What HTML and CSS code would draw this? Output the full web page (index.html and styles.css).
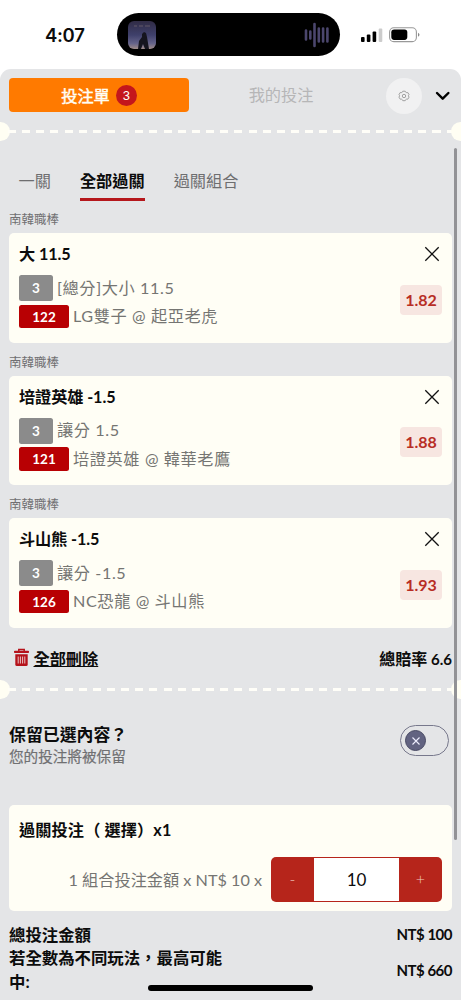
FILE: index.html
```html
<!DOCTYPE html>
<html lang="zh-Hant">
<head>
<meta charset="utf-8">
<meta name="viewport" content="width=device-width, initial-scale=1">
<title>投注單</title>
<link rel="stylesheet" href="styles.css">
</head>
<body>
<div class="screen">
  <div class="status">
    <div class="time">4:07</div>
    <div class="island">
      <svg class="art" width="28" height="28" viewBox="0 0 28 28">
        <defs><linearGradient id="sky" x1="0" y1="0" x2="0" y2="1"><stop offset="0" stop-color="#302b45"/><stop offset=".5" stop-color="#3f406b"/><stop offset=".8" stop-color="#65638a"/><stop offset="1" stop-color="#a08c88"/></linearGradient></defs>
        <rect width="28" height="28" rx="6" fill="url(#sky)"/>
        <path d="M6 5h3M11 5h4M17 5h5" stroke="#625869" stroke-width="1"/>
        <path d="M10 28l1-8 3-4 0-3 2-2 2 1 1 4 1 6 1 6h-4l-2-5-2 5z" fill="#15151f"/>
      </svg>
      <svg class="wave" width="26" height="26" viewBox="0 0 26 26" stroke="#4b466d" stroke-width="2.6" stroke-linecap="round"><path d="M2 8.500v9M6.300 9.500v7M10.500 2v22M14.800 6.500v13M19.100 6.500v13M23.400 6.500v13"/></svg>
    </div>
    <div class="signals">
      <svg width="22" height="15" viewBox="0 0 22 15"><rect x="0" y="9" width="3.600" height="5" rx="1"/><rect x="5.800" y="6.500" width="3.600" height="7.500" rx="1"/><rect x="11.600" y="3.500" width="3.600" height="10.500" rx="1"/><rect x="17.700" y="0.500" width="3.600" height="13.500" rx="1" fill="#ccc"/></svg>
      <svg width="32" height="16" viewBox="0 0 32 16"><rect x=".6" y=".8" width="26.800" height="13.800" rx="4.200" fill="none" stroke="#999" stroke-width="1.100"/><rect x="2.300" y="2.500" width="16" height="10.400" rx="2.800"/><path d="M29 5.700q3 2 0 4z" fill="#888"/></svg>
    </div>
  </div>

  <div class="slip">
    <header class="top">
      <div class="main-tab">投注單<span class="count">3</span></div>
      <div class="other-tab">我的投注</div>
      <div class="gear"><svg width="12" height="12" viewBox="0 0 12 12" fill="none" stroke="#999" stroke-width=".9"><path d="M4.800 1.200h2.400l.5 1 1.100.5 1.100-.1 1.100 2-.6 1.100.6 1.500-1.200 2-1.200-.1-.9.600-.5 1H4.800l-.5-1-.9-.6-1.200.1-1.200-2 .6-1.500L1 4.600l1.100-2 1.100.1 1.100-.5z"/><circle cx="6" cy="6" r="1.700"/></svg></div>
      <svg class="chev" width="16" height="10" viewBox="0 0 16 10" fill="none" stroke="#000" stroke-width="2.400" stroke-linecap="round" stroke-linejoin="round"><path d="M2 2l5.700 5.700L13.400 2"/></svg>
    </header>
    <div class="tear"><i class="hole"></i><i class="dashes"></i><i class="hole right"></i></div>

    <nav class="modes"><span>一關</span><span class="active">全部過關</span><span>過關組合</span></nav>

    <section class="bet">
      <div class="league">南韓職棒</div>
      <div class="card">
        <div class="pick">大 11.5</div>
        <div class="line market"><b class="tag">3</b><span>[總分]大小 11.5</span></div>
        <div class="line"><b class="tag red">122</b><span>LG雙子 @ 起亞老虎</span></div>
        <svg class="close" width="16" height="16" viewBox="0 0 16 16"><path d="M1.300 1.300l13.400 13.400M14.700 1.300L1.300 14.700"/></svg>
        <div class="odds">1.82</div>
      </div>
    </section>
    <section class="bet">
      <div class="league">南韓職棒</div>
      <div class="card">
        <div class="pick">培證英雄 -1.5</div>
        <div class="line market"><b class="tag">3</b><span>讓分 1.5</span></div>
        <div class="line"><b class="tag red">121</b><span>培證英雄 @ 韓華老鷹</span></div>
        <svg class="close" width="16" height="16" viewBox="0 0 16 16"><path d="M1.300 1.300l13.400 13.400M14.700 1.300L1.300 14.700"/></svg>
        <div class="odds">1.88</div>
      </div>
    </section>
    <section class="bet">
      <div class="league">南韓職棒</div>
      <div class="card">
        <div class="pick">斗山熊 -1.5</div>
        <div class="line market"><b class="tag">3</b><span>讓分 -1.5</span></div>
        <div class="line"><b class="tag red">126</b><span>NC恐龍 @ 斗山熊</span></div>
        <svg class="close" width="16" height="16" viewBox="0 0 16 16"><path d="M1.300 1.300l13.400 13.400M14.700 1.300L1.300 14.700"/></svg>
        <div class="odds">1.93</div>
      </div>
    </section>

    <div class="totals">
      <svg width="15" height="19" viewBox="0 0 15 19"><path d="M4.800 3V1.500h5.400V3" fill="none" stroke="#b5121b" stroke-width="1.500"/><rect x="0" y="2.700" width="15" height="2.300" rx=".8" fill="#b5121b"/><path d="M1.300 6.300h12.400v10.200q0 1.500-1.500 1.500H2.800q-1.500 0-1.500-1.500z" fill="#b5121b"/><path d="M4.200 8.500v7M6.400 8.500v7M8.600 8.500v7M10.800 8.500v7" stroke="#eed8d8" stroke-width=".9"/></svg>
      <span class="clear">全部刪除</span>
      <span class="sum">總賠率 <em>6.6</em></span>
    </div>
    <div class="tear"><i class="hole"></i><i class="dashes"></i><i class="hole right"></i></div>

    <div class="keep">
      <div><div class="keep-title">保留已選內容？</div><div class="keep-note">您的投注將被保留</div></div>
      <div class="switch"><span class="knob"><svg width="10" height="10" viewBox="0 0 10 10"><path d="M1.500 1.500l7 7M8.500 1.500l-7 7" stroke="#eef" stroke-width="1.100"/></svg></span></div>
    </div>

    <div class="stake">
      <div class="stake-title">過關投注（ 選擇）x1</div>
      <div class="stake-row">
        <span class="formula">1 組合投注金額 x NT$ 10 x</span>
        <div class="stepper"><span class="step">-</span><span class="value">10</span><span class="step">+</span></div>
      </div>
    </div>

    <footer class="summary">
      <div class="sum-row"><span>總投注金額</span><span class="money">NT$ 100</span></div>
      <div class="sum-row"><span class="potential">若全數為不同玩法，最高可能中:</span><span class="money">NT$ 660</span></div>
    </footer>
    <div class="scrollbar"></div>
  </div>
  <div class="home"></div>
</div>
</body>
</html>
```
FILE: styles.css
```css
* { box-sizing: border-box; }
body { margin: 0; background: #fff; color: #0c0c0c; font-family: Lato, "Noto Sans CJK TC", sans-serif; font-size: 16.2px; }
svg { display: block; flex: none; }
.screen { position: relative; width: 461px; height: 1000px; overflow: hidden; }
.status { height: 69px; display: flex; align-items: flex-start; padding-top: 13px; }
.time { width: 117px; padding-left: 45px; font: 600 18.500px/44px Inter, sans-serif; letter-spacing: -0.3px; }
.island { width: 223px; height: 43px; border-radius: 22px; background: #000; display: flex; justify-content: space-between; align-items: center; padding: 0 10px 0 11px; }
.signals { display: flex; gap: 6px; align-items: center; padding: 14px 0 0 21px; }
.slip { position: relative; height: 931px; background: #e4e5e7; border-radius: 11px 11px 0 0; }
.top { height: 53px; padding: 9px 10px 0 9px; display: flex; align-items: flex-start; }
.main-tab { width: 180px; height: 34px; border-radius: 4px; background: #ff7a00; color: #fffef5; display: flex; align-items: center; justify-content: center; gap: 6px; -webkit-text-stroke: .45px; }
.count { width: 21px; height: 21px; border-radius: 50%; background: #c4161c; font: 13px/21px "Liberation Sans", sans-serif; text-align: center; -webkit-text-stroke: 0; }
.other-tab { width: 183px; padding-left: 1px; line-height: 34px; color: #b6b6b7; text-align: center; }
.gear { width: 36px; height: 36px; margin-left: 14px; border-radius: 50%; background: #f1f1f2; display: flex; align-items: center; justify-content: center; }
.chev { margin: 13px 0 0 13px; }
.tear { height: 19px; display: flex; align-items: center; justify-content: space-between; overflow: hidden; }
.hole { width: 19px; height: 19px; border-radius: 50%; background: #fffef3; margin-left: -9px; flex: none; }
.hole.right { margin: 0 -9px 0 0; }
.dashes { flex: 1; height: 3px; margin: 0 -2px 0 -2px; background: repeating-linear-gradient(90deg, #fffef8 0 8px, transparent 8px 14.150px); }
.modes { height: 69px; padding: 26px 0 0 18.500px; display: flex; align-items: flex-start; gap: 29px; color: #6e6e70; line-height: 27px; }
.modes span { height: 33.500px; }
.modes .active { color: #0c0c0c; font-weight: 700; border-bottom: 3.500px solid #b5171c; }
.bet { height: 142.500px; padding: 0 9px; }
.league { height: 23.300px; font-size: 12.500px; line-height: 20px; color: #707072; }
.card { position: relative; height: 109.500px; border-radius: 5px; background: #fffef5; padding: 8px 10px; }
.pick { height: 34px; line-height: 26px; font-weight: 700; letter-spacing: -.1px; }
.line { height: 23.500px; display: flex; align-items: center; gap: 4px; color: #757572; letter-spacing: .6px; line-height: 22px; white-space: nowrap; }
.line span { margin-top: -1px; }
.market { height: 26px; margin-bottom: 3.500px; }
.tag { width: 34px; height: 26px; border-radius: 2.500px; background: #8b8b8b; color: #fff; font-size: 13.500px; line-height: 27px; letter-spacing: 0; text-align: center; }
.tag.red { width: 50px; height: 23.500px; line-height: 24px; background: #b80003; }
.close { position: absolute; right: 12px; top: 13px; fill: none; stroke: #111; stroke-width: 1.300; }
.odds { position: absolute; right: 10px; top: 51.500px; width: 42px; height: 30px; border-radius: 4px; background: #f7e6e1; color: #b82d25; font-size: 16px; line-height: 30px; font-weight: 700; text-align: center; }
.totals { height: 42.500px; padding: 0 9px 2px 13.500px; display: flex; align-items: center; font-weight: 700; }
.clear { margin-left: 5px; text-decoration: underline; text-decoration-thickness: 1.200px; text-underline-offset: 1px; }
.sum { margin-left: auto; font-size: 16px; }
.sum em { font-style: normal; font-size: 15px; }
.keep { height: 106px; padding: 24.500px 12px 0 9px; display: flex; justify-content: space-between; }
.keep-title { height: 23px; line-height: 22px; font-size: 16.900px; font-weight: 700; }
.keep-note { font-size: 14.600px; line-height: 20px; color: #707072; -webkit-text-stroke: .2px; }
.switch { width: 49px; height: 31px; margin-top: 1.500px; border: 1px solid #77788c; border-radius: 16px; padding: 4px; }
.knob { width: 21px; height: 21px; border-radius: 50%; background: #626381; border: 1px solid #484963; display: flex; align-items: center; justify-content: center; }
.stake { height: 106px; margin: 0 9px; border-radius: 5px; background: #fffef5; padding: 10px 10px; }
.stake-title { height: 41.500px; line-height: 30px; font-weight: 700; letter-spacing: .1px; white-space: nowrap; }
.stake-row { display: flex; justify-content: flex-end; align-items: center; gap: 9px; }
.formula { color: #757572; white-space: nowrap; }
.stepper { width: 171px; height: 45px; display: flex; border-radius: 5px; background: #b6251b; padding: 1px 0; }
.step { width: 43px; line-height: 42px; text-align: center; color: #efc9bd; font-size: 16px; font-weight: 300; }
.value { flex: 1; background: #fff; line-height: 43px; text-align: center; font-size: 17px; }
.summary { padding: 11px 9px 0; font-size: 16.400px; font-weight: 700; line-height: 23.400px; }
.sum-row { display: flex; justify-content: space-between; align-items: center; }
.potential { width: 218px; }
.money { padding-top: 1px; font-size: 15px; letter-spacing: -.5px; }
.scrollbar { position: absolute; left: 454px; top: 79px; width: 3px; height: 692px; border-radius: 2px; background: #929296; }
.home { position: absolute; left: 148px; top: 984.500px; width: 165px; height: 6px; border-radius: 3px; background: #000; }
```
